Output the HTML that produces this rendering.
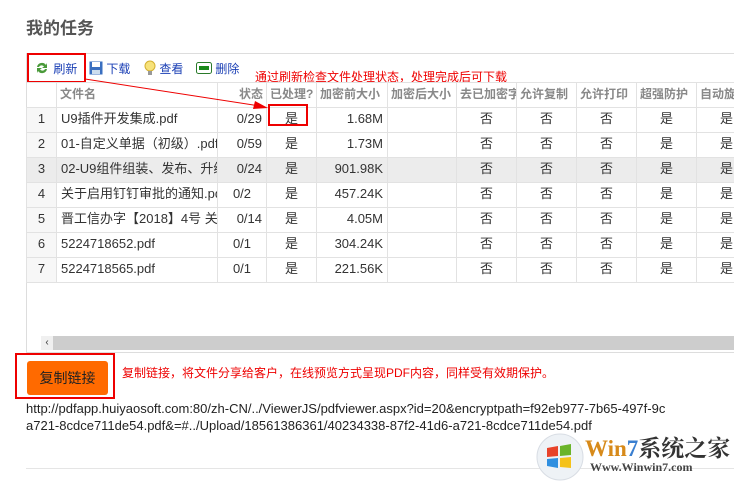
<!DOCTYPE html>
<html><head><meta charset="utf-8"><style>
*{margin:0;padding:0;box-sizing:border-box}
body{width:734px;height:482px;background:#fff;position:relative;overflow:hidden;font-family:"Liberation Sans","Noto Sans CJK SC",sans-serif;font-size:13px;color:#333}
.abs{position:absolute}
h1{position:absolute;left:26px;top:14px;font-size:17px;font-weight:bold;color:#555;font-family:"Noto Sans CJK SC",sans-serif}
.panel{position:absolute;left:26px;top:53px;width:720px;height:300px;border:1px solid #ddd;border-right:none}
table{border-collapse:collapse;position:absolute;left:26px;top:82px;table-layout:fixed;width:730px}
td,th{border:1px solid #e2e2e2;height:25px;white-space:nowrap;overflow:hidden;font-size:13px;padding:0 4px;vertical-align:top;line-height:22px}
th{color:#888;font-weight:bold;font-size:12px;background:#fff;text-align:left;height:25px;padding:0 3px}
td.n{background:#f7f7f7;text-align:center}
td.c{text-align:center}
td.r{text-align:right}
tr.hl td{background:#ececec}
.tb{position:absolute;top:60px;font-size:12px;color:#1a3fb5}
.red{color:#e00}
</style></head><body>
<h1>我的任务</h1>
<div class="panel"></div>
<div class="tb" style="left:34px"><svg width="16" height="16" viewBox="0 0 16 16" style="vertical-align:-3px"><path d="M3 7a5 5 0 0 1 9-2l1-2v5h-5l2-1.5A3 3 0 0 0 5 7z" fill="#4a9a3a"/><path d="M13 9a5 5 0 0 1-9 2l-1 2V8h5l-2 1.5A3 3 0 0 0 11 9z" fill="#4a9a3a"/></svg> 刷新</div>
<div class="tb" style="left:89px"><svg width="14" height="14" viewBox="0 0 14 14" style="vertical-align:-2px"><rect x="0.5" y="0.5" width="13" height="13" fill="#3a6fc0"/><rect x="3" y="1" width="8" height="5" fill="#fff"/><rect x="3" y="9" width="8" height="4" fill="#cde"/></svg> 下载</div>
<div class="tb" style="left:144px"><svg width="12" height="16" viewBox="0 0 12 16" style="vertical-align:-3px"><circle cx="6" cy="6" r="5" fill="#f7e27a" stroke="#d4b030"/><rect x="4" y="11" width="4" height="4" fill="#999"/></svg> 查看</div>
<div class="tb" style="left:196px"><svg width="16" height="12" viewBox="0 0 16 12" style="vertical-align:-1px"><rect x="0.5" y="0.5" width="15" height="11" rx="2" fill="#fff" stroke="#2a7a2a"/><rect x="3" y="4" width="10" height="4" fill="#1a8a1a"/></svg> 删除</div>
<div class="abs" style="left:27px;top:53px;width:59px;height:30px;border:2px solid #e00"></div>
<div class="abs red" style="left:255px;top:68px;font-size:12px">通过刷新检查文件处理状态，处理完成后可下载</div>
<svg class="abs" style="left:85px;top:76px;z-index:2" width="190" height="40"><line x1="0" y1="3" x2="175" y2="30" stroke="#e00" stroke-width="1"/><polygon points="183,32 170,25 168,33" fill="#e00"/></svg>
<table>
<colgroup><col style="width:30px"><col style="width:161px"><col style="width:49px"><col style="width:50px"><col style="width:71px"><col style="width:69px"><col style="width:60px"><col style="width:60px"><col style="width:60px"><col style="width:60px"><col style="width:60px"></colgroup>
<tr><th style="border-left:none"></th><th>文件名</th><th style="text-align:right">状态</th><th>已处理?</th><th>加密前大小</th><th>加密后大小</th><th>去已加密字</th><th>允许复制</th><th>允许打印</th><th>超强防护</th><th>自动旋</th></tr>
<tr><td class="n">1</td><td>U9插件开发集成.pdf</td><td class="r">0/29</td><td class="c">是</td><td class="r">1.68M</td><td></td><td class="c">否</td><td class="c">否</td><td class="c">否</td><td class="c">是</td><td class="c">是</td></tr>
<tr><td class="n">2</td><td>01-自定义单据（初级）.pdf</td><td class="r">0/59</td><td class="c">是</td><td class="r">1.73M</td><td></td><td class="c">否</td><td class="c">否</td><td class="c">否</td><td class="c">是</td><td class="c">是</td></tr>
<tr class="hl"><td class="n">3</td><td>02-U9组件组装、发布、升级</td><td class="r">0/24</td><td class="c">是</td><td class="r">901.98K</td><td></td><td class="c">否</td><td class="c">否</td><td class="c">否</td><td class="c">是</td><td class="c">是</td></tr>
<tr><td class="n">4</td><td>关于启用钉钉审批的通知.pdf</td><td class="c">0/2</td><td class="c">是</td><td class="r">457.24K</td><td></td><td class="c">否</td><td class="c">否</td><td class="c">否</td><td class="c">是</td><td class="c">是</td></tr>
<tr><td class="n">5</td><td>晋工信办字【2018】4号 关于</td><td class="r">0/14</td><td class="c">是</td><td class="r">4.05M</td><td></td><td class="c">否</td><td class="c">否</td><td class="c">否</td><td class="c">是</td><td class="c">是</td></tr>
<tr><td class="n">6</td><td>5224718652.pdf</td><td class="c">0/1</td><td class="c">是</td><td class="r">304.24K</td><td></td><td class="c">否</td><td class="c">否</td><td class="c">否</td><td class="c">是</td><td class="c">是</td></tr>
<tr><td class="n">7</td><td>5224718565.pdf</td><td class="c">0/1</td><td class="c">是</td><td class="r">221.56K</td><td></td><td class="c">否</td><td class="c">否</td><td class="c">否</td><td class="c">是</td><td class="c">是</td></tr>
</table>
<div class="abs" style="left:268px;top:104px;width:40px;height:22px;border:2px solid #e00"></div>
<div class="abs" style="left:41px;top:336px;width:693px;height:14px;background:#cdcdcd"></div>
<div class="abs" style="left:41px;top:336px;width:12px;height:14px;background:#f0f0f0;font-size:10px;text-align:center;line-height:14px;color:#333">‹</div>
<div class="abs" style="left:15px;top:353px;width:100px;height:46px;border:2px solid #e00"></div>
<div class="abs" style="left:27px;top:361px;width:81px;height:34px;background:#ff6a00;border-radius:3px;text-align:center;line-height:34px;font-size:14px;color:#222">复制链接</div>
<div class="abs red" style="left:122px;top:364px;font-size:12px">复制链接，将文件分享给客户，在线预览方式呈现PDF内容，同样受有效期保护。</div>
<div class="abs" style="left:26px;top:400px;font-size:13px;color:#222;line-height:17px;white-space:nowrap">http://pdfapp.huiyaosoft.com:80/zh-CN/../ViewerJS/pdfviewer.aspx?id=20&amp;encryptpath=f92eb977-7b65-497f-9c<br>a721-8cdce711de54.pdf&amp;=#../Upload/18561386361/40234338-87f2-41d6-a721-8cdce711de54.pdf</div>
<div class="abs" style="left:26px;top:468px;width:708px;height:1px;background:#e5e5e5"></div>
<svg class="abs" style="left:535px;top:432px" width="50" height="50"><circle cx="25" cy="25" r="23" fill="#eef2f6" stroke="#d8dde4"/><path d="M12 16l11-2v10l-11 1z" fill="#e8432a"/><path d="M25 14l11-2v11l-11 1z" fill="#6ab42a"/><path d="M12 27l11-1v10l-11-2z" fill="#2f8fe0"/><path d="M25 26l11-1v11l-11-1z" fill="#f5c21a"/></svg>
<div class="abs" style="left:585px;top:430px;font-size:23px;font-weight:bold;color:#d78a1a;font-family:'Liberation Serif','Noto Serif CJK SC',serif">Win<span style="color:#3a7fd0">7</span><span style="color:#333">系统之家</span></div>
<div class="abs" style="left:590px;top:460px;font-size:12px;font-weight:bold;color:#444;font-family:'Liberation Serif',serif">Www.Winwin7.com</div>
</body></html>
